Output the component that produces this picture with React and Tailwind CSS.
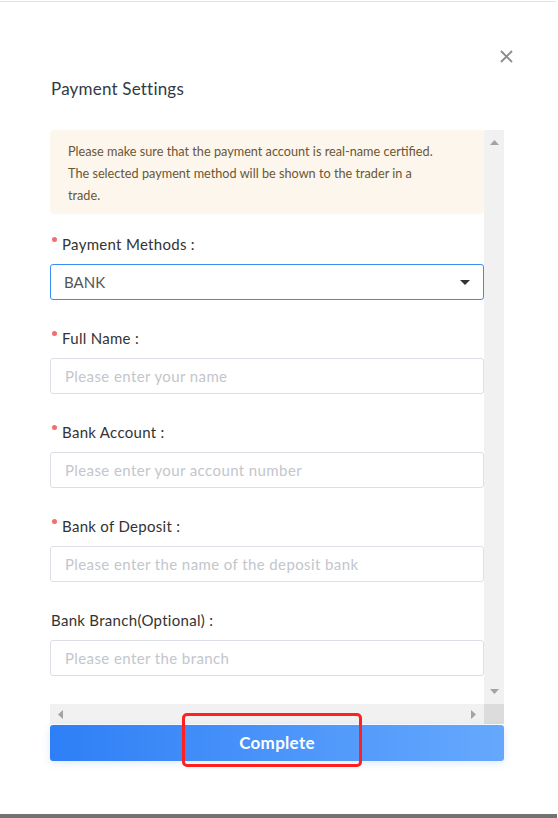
import React from "react";

const font = { fontFamily: "Lato, 'Liberation Sans', sans-serif" };

function Label({ text, required = true }) {
  return (
    <div className="flex items-start h-[20px] leading-[20px] text-[15px] tracking-[0.3px] text-[#333333]">
      {required ? (
        <span className="w-[5px] h-[5px] rounded-full bg-[#f56c6c] mt-[3px] ml-[2px] mr-[5px] shrink-0" />
      ) : (
        <span className="w-[1px]" />
      )}
      <span>{text}</span>
    </div>
  );
}

function Field({ label, placeholder, required = true }) {
  return (
    <div className="flex flex-col mt-[28px]">
      <Label text={label} required={required} />
      <div className="mt-[10px] h-[36px] border border-[#dcdfe6] rounded-[3px] flex items-center pl-[14px] pr-[15px] text-[15px] tracking-[0.4px] text-[#c3c6cc] shrink-0">
        {placeholder}
      </div>
    </div>
  );
}

export default function App() {
  return (
    <div className="relative w-[558px] h-[818px] bg-white overflow-hidden flex flex-col" style={font}>
      <div className="mt-px h-px w-[556px] bg-[#e2e2e2] shrink-0" />
      <div className="flex justify-end pr-[45px] pt-[48px] shrink-0">
        <svg width="13" height="13" viewBox="0 0 13 13">
          <path d="M1 1 L12 12 M12 1 L1 12" stroke="#8a8a8a" strokeWidth="1.8" />
        </svg>
      </div>
      <div className="pl-[51px] mt-[14px] h-[24px] leading-[24px] text-[17px] tracking-[0.2px] text-[#323a45] shrink-0">
        Payment Settings
      </div>
      <div className="mx-[50px] mt-[29px] w-[454px] flex flex-col shrink-0">
        <div className="flex h-[574px]">
          <div className="w-[434px] overflow-hidden flex flex-col">
            <div className="bg-[#fdf6ec] rounded-[4px] pl-[18px] pr-[44px] pt-[10px] pb-[8px] text-[12.7px] leading-[22px] text-[#6b5634] shrink-0">
              Please make sure that the payment account is real-name certified. The selected payment method will be shown to the trader in a trade.
            </div>
            <div className="flex flex-col mt-[20px]">
              <Label text="Payment Methods :" />
              <div className="mt-[10px] h-[36px] border border-[#3a8cf5] rounded-[3px] flex items-center justify-between pl-[13px] pr-[13px] text-[15px] text-[#555555] shrink-0">
                <span>BANK</span>
                <svg width="10" height="5" viewBox="0 0 10 5">
                  <path d="M0 0 L10 0 L5 5 Z" fill="#333333" />
                </svg>
              </div>
            </div>
            <Field label="Full Name :" placeholder="Please enter your name" />
            <Field label="Bank Account :" placeholder="Please enter your account number" />
            <Field label="Bank of Deposit :" placeholder="Please enter the name of the deposit bank" />
            <Field label="Bank Branch(Optional) :" placeholder="Please enter the branch" required={false} />
          </div>
          <div className="w-[20px] bg-[#f1f1f1] flex flex-col items-center justify-between pt-[10px] pb-[10px]">
            <svg width="9" height="5" viewBox="0 0 9 5">
              <path d="M0 5 L4.5 0 L9 5 Z" fill="#a3a3a3" />
            </svg>
            <svg width="9" height="5" viewBox="0 0 9 5">
              <path d="M0 0 L9 0 L4.5 5 Z" fill="#a3a3a3" />
            </svg>
          </div>
        </div>
        <div className="flex h-[20px]">
          <div className="w-[434px] bg-[#f1f1f1] flex items-center justify-between pl-[8px] pr-[8px]">
            <svg width="5" height="9" viewBox="0 0 5 9">
              <path d="M5 0 L0 4.5 L5 9 Z" fill="#a3a3a3" />
            </svg>
            <svg width="5" height="9" viewBox="0 0 5 9">
              <path d="M0 0 L5 4.5 L0 9 Z" fill="#a3a3a3" />
            </svg>
          </div>
          <div className="w-[20px] bg-[#dcdcdc]" />
        </div>
        <div className="mt-px h-[36px] rounded-[3px] bg-gradient-to-r from-[#2e7ff6] to-[#65a8fd] shadow-[0_2px_8px_rgba(80,140,240,0.18)] flex items-center justify-center text-white text-[17px] font-bold tracking-[0.3px]">
          Complete
        </div>
      </div>
      <div className="flex-1" />
      <div className="h-[4px] w-[557px] bg-[#727272] shrink-0" />
      <div className="absolute left-[182px] top-[713px] w-[180px] h-[54px] border-[3px] border-[#ff2020] rounded-[5px]" />
    </div>
  );
}
